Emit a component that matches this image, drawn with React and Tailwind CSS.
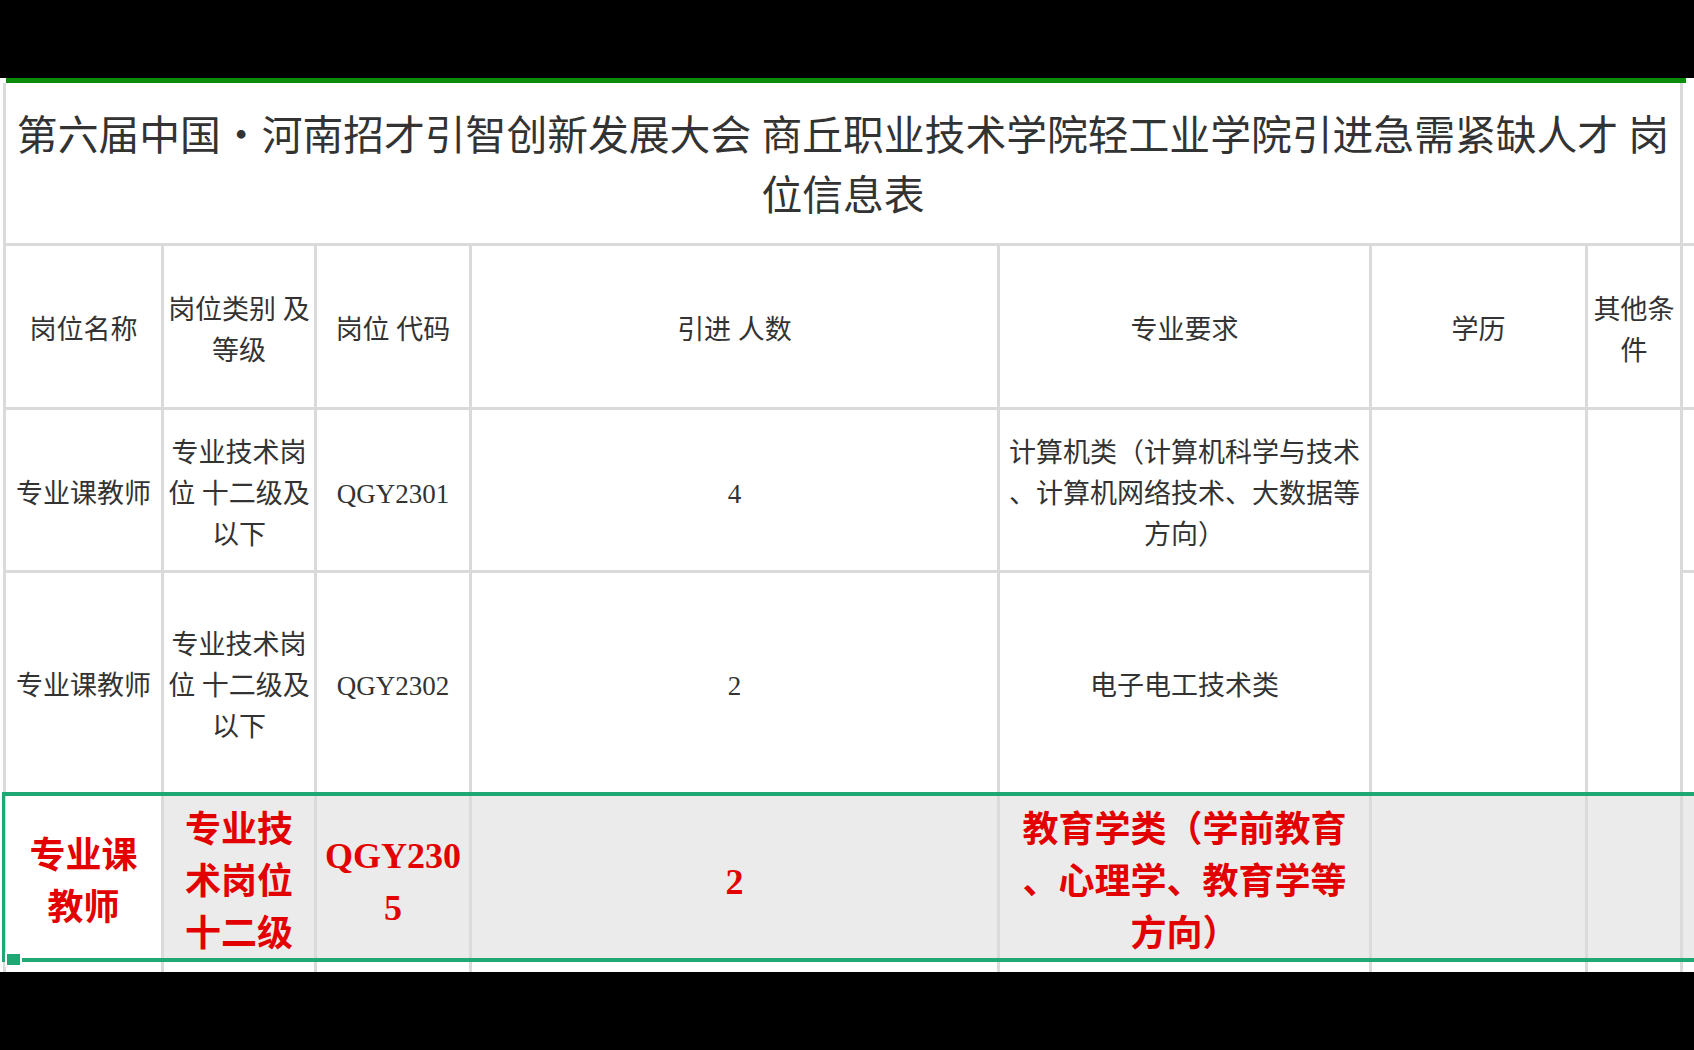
import React from "react";

const Cell = ({ className = "", children }) => (
  <div className={"flex items-center justify-center text-center " + className}>
    <div>{children}</div>
  </div>
);

export default function App() {
  const body = "bg-white text-[27px] leading-[41px] text-[#333] pt-[8px]";
  const sel = "bg-[#ebebeb] text-[36px] leading-[52px] font-bold text-[#e30000] pt-[11px]";
  return (
    <div className="w-[1694px] h-[1050px] bg-black overflow-hidden font-['Liberation_Serif','Noto_Sans_CJK_SC',serif]">
      <div className="h-[78px]" />
      <div className="relative bg-white h-[894px] overflow-hidden">
        <div className="h-[5px] ml-[6px] w-[1680px] bg-[#0b8c0b]" />
        <div
          className="ml-[3px] pl-[3px] grid gap-[3px] bg-[#dadada] w-max"
          style={{
            gridTemplateColumns: "155px 150px 152px 525px 369px 213px 92px 20px",
            gridTemplateRows: "160px 161px 160px 219px 163px 20px",
          }}
        >
          {/* title */}
          <Cell className="col-span-7 bg-white text-[40.8px] leading-[60px] text-[#333] pt-2">
            第六届中国・河南招才引智创新发展大会 商丘职业技术学院轻工业学院引进急需紧缺人才 岗
            <br />
            位信息表
          </Cell>
          <div className="bg-white" />

          {/* header */}
          <Cell className={body}>岗位名称</Cell>
          <Cell className={body}>
            岗位类别 及<br />等级
          </Cell>
          <Cell className={body}>岗位 代码</Cell>
          <Cell className={body}>引进 人数</Cell>
          <Cell className={body}>专业要求</Cell>
          <Cell className={body}>学历</Cell>
          <Cell className={body}>
            其他条<br />件
          </Cell>
          <div className="bg-white" />

          {/* row 1 */}
          <Cell className={body}>专业课教师</Cell>
          <Cell className={body}>
            专业技术岗<br />位 十二级及<br />以下
          </Cell>
          <Cell className={body}>QGY2301</Cell>
          <Cell className={body}>4</Cell>
          <Cell className={body}>
            计算机类（计算机科学与技术<br />、计算机网络技术、大数据等<br />方向）
          </Cell>
          <div className="bg-white row-span-2" />
          <div className="bg-white row-span-2" />
          <div className="bg-white" />

          {/* row 2 */}
          <Cell className={body}>专业课教师</Cell>
          <Cell className={body}>
            专业技术岗<br />位 十二级及<br />以下
          </Cell>
          <Cell className={body}>QGY2302</Cell>
          <Cell className={body}>2</Cell>
          <Cell className={body}>电子电工技术类</Cell>
          <div className="bg-white" />

          {/* row 3 (selected) */}
          <Cell className={sel + " !bg-white"}>
            专业课<br />教师
          </Cell>
          <Cell className={sel}>
            专业技<br />术岗位<br />十二级
          </Cell>
          <Cell className={sel}>
            QGY230<br />5
          </Cell>
          <Cell className={sel}>2</Cell>
          <Cell className={sel}>
            教育学类（学前教育<br />、心理学、教育学等<br />方向）
          </Cell>
          <div className="bg-[#ebebeb]" />
          <div className="bg-[#ebebeb]" />
          <div className="bg-[#ebebeb]" />

          {/* row 4 (partial) */}
          <div className="bg-white" />
          <div className="bg-white" />
          <div className="bg-white" />
          <div className="bg-white" />
          <div className="bg-white" />
          <div className="bg-white" />
          <div className="bg-white" />
          <div className="bg-white" />
        </div>

        {/* selection box */}
        <div className="absolute left-[2px] top-[714px] h-[170px] w-[1720px] border-y-4 border-l-[3px] border-r-0 border-[#1fa774] pointer-events-none" />
        <div className="absolute left-[5px] top-[874px] w-[17px] h-[15px] border-2 border-white bg-[#1fa774]" />
      </div>
    </div>
  );
}
